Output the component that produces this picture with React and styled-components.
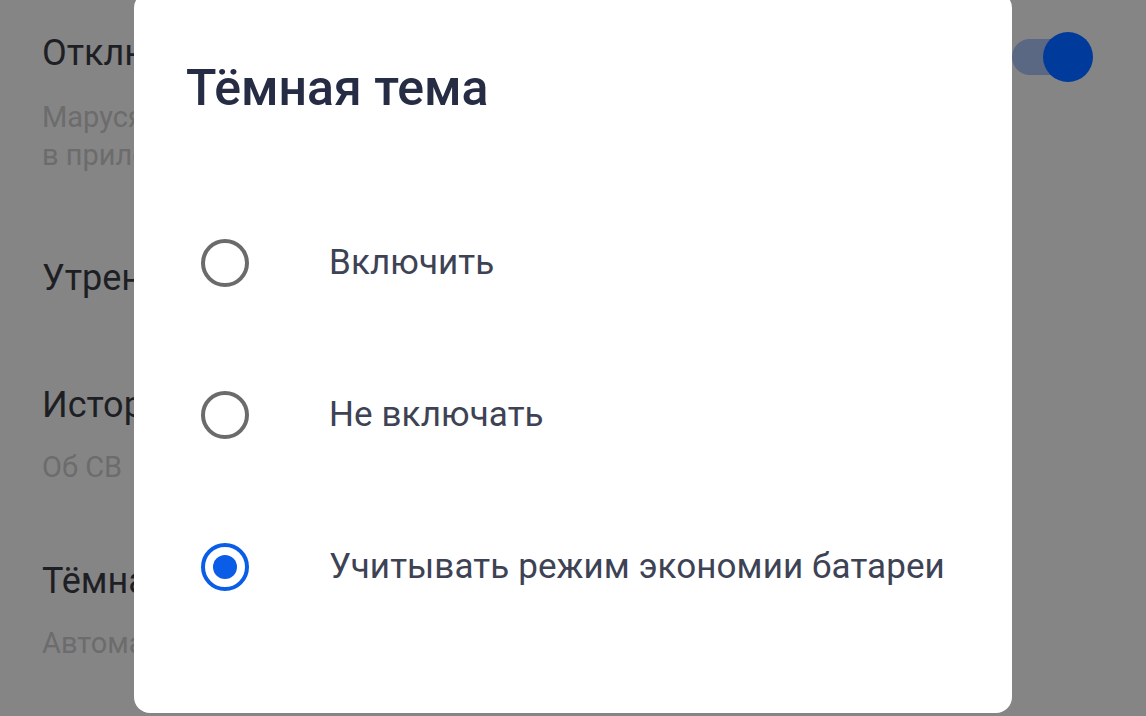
import React from "react";
import styled, { createGlobalStyle } from "styled-components";

const Global = createGlobalStyle`
  html, body { margin: 0; padding: 0; }
  body {
    width: 1146px;
    height: 716px;
    overflow: hidden;
    background: #858585;
    font-family: Roboto, "Noto Sans", "Liberation Sans", sans-serif;
  }
`;

const Screen = styled.div`
  position: relative;
  width: 1146px;
  height: 716px;
  overflow: hidden;
  background: #858585;
`;

const SettingsList = styled.div`
  display: flex;
  flex-direction: column;
  padding-left: 42px;
  padding-right: 50px;
`;

const SettingRow = styled.div`
  display: flex;
  align-items: flex-start;
  justify-content: space-between;
  margin-top: ${(p) => p.$offset}px;
`;

const SettingText = styled.div`
  display: flex;
  flex-direction: column;
  width: 92px;
  overflow: hidden;
`;

const SettingTitle = styled.div`
  font-size: 36px;
  line-height: 44px;
  color: #1e1f24;
  white-space: nowrap;
  overflow: hidden;
`;

const SettingSub = styled.div`
  margin-top: ${(p) => p.$gap || 23}px;
  font-size: 29px;
  line-height: 38px;
  color: #6c6c6c;
  white-space: pre;
  overflow: hidden;
`;

const Toggle = styled.div`
  position: relative;
  width: 84px;
  height: 50px;
  margin-top: 1px;
  display: flex;
  align-items: center;
`;

const Track = styled.div`
  width: 60px;
  height: 36px;
  border-radius: 18px;
  background: #5b6884;
`;

const Thumb = styled.div`
  position: absolute;
  right: 3px;
  top: 0;
  width: 50px;
  height: 50px;
  border-radius: 50%;
  background: #003a9a;
`;

const Dialog = styled.div`
  position: absolute;
  left: 134px;
  top: -8px;
  width: 878px;
  height: 721px;
  background: #ffffff;
  border-radius: 16px;
  display: flex;
  flex-direction: column;
  padding: 70px 0 0 0;
  box-sizing: border-box;
`;

const DialogTitle = styled.h2`
  margin: 0;
  padding-left: 52px;
  font-size: 50px;
  line-height: 52px;
  font-weight: 500;
  color: #252c44;
`;

const Options = styled.div`
  display: flex;
  flex-direction: column;
  margin-top: 73px;
`;

const Option = styled.label`
  display: flex;
  align-items: center;
  height: 152px;
  padding-left: 67px;
  cursor: pointer;
`;

const Radio = styled.span`
  box-sizing: border-box;
  width: 48px;
  height: 48px;
  border-radius: 50%;
  border: 4px solid ${(p) => (p.$checked ? "#0a5de6" : "#6b6b6b")};
  display: flex;
  align-items: center;
  justify-content: center;
  flex: none;

  &::after {
    content: "";
    display: ${(p) => (p.$checked ? "block" : "none")};
    width: 24px;
    height: 24px;
    border-radius: 50%;
    background: #0a5de6;
  }
`;

const OptionLabel = styled.span`
  margin-left: 80px;
  font-size: 35px;
  line-height: 40px;
  letter-spacing: 0.1px;
  color: #3d4254;
  white-space: nowrap;
`;

const options = [
  { label: "Включить", checked: false },
  { label: "Не включать", checked: false },
  { label: "Учитывать режим экономии батареи", checked: true },
];

export default function App() {
  return (
    <Screen>
      <Global />
      <SettingsList>
        <SettingRow $offset={31}>
          <SettingText>
            <SettingTitle>Отключить</SettingTitle>
            <SettingSub>{"Маруся\nв приложении"}</SettingSub>
          </SettingText>
          <Toggle>
            <Track />
            <Thumb />
          </Toggle>
        </SettingRow>
        <SettingRow $offset={82}>
          <SettingText>
            <SettingTitle>Утренний брифинг</SettingTitle>
          </SettingText>
        </SettingRow>
        <SettingRow $offset={83}>
          <SettingText>
            <SettingTitle>История запросов</SettingTitle>
            <SettingSub $gap={21}>Об СВ</SettingSub>
          </SettingText>
        </SettingRow>
        <SettingRow $offset={73}>
          <SettingText>
            <SettingTitle>Тёмная тема</SettingTitle>
            <SettingSub $gap={21}>Автоматически</SettingSub>
          </SettingText>
        </SettingRow>
      </SettingsList>

      <Dialog role="dialog">
        <DialogTitle>Тёмная тема</DialogTitle>
        <Options>
          {options.map((o) => (
            <Option key={o.label}>
              <Radio $checked={o.checked} />
              <OptionLabel>{o.label}</OptionLabel>
            </Option>
          ))}
        </Options>
      </Dialog>
    </Screen>
  );
}
